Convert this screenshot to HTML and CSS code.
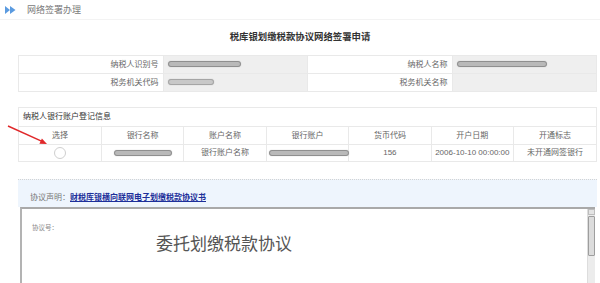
FILE: index.html
```html
<!DOCTYPE html>
<html lang="zh-CN">
<head>
    <meta charset="UTF-8">
    <title>网络签署办理</title>
    <link rel="stylesheet" href="styles.css">
</head>
<body>
    <div class="topbar">
        <svg viewBox="0 0 11 8"><polygon points="0,0 5,4 0,8" fill="#5b9be0"/><polygon points="5,0 10.5,4 5,8" fill="#5b9be0"/></svg>
        <span>网络签署办理</span>
    </div>

    <h1 class="title">税库银划缴税款协议网络签署申请</h1>

    <table class="info">
        <tr>
            <td class="lbl">纳税人识别号</td>
            <td class="val"><span class="blur" style="width:73px"></span></td>
            <td class="lbl">纳税人名称</td>
            <td class="val"><span class="blur" style="width:90px"></span></td>
        </tr>
        <tr>
            <td class="lbl">税务机关代码</td>
            <td class="val"><span class="blur light" style="width:46px"></span></td>
            <td class="lbl">税务机关名称</td>
            <td class="val"></td>
        </tr>
    </table>

    <div class="bank">
        <div class="bank-title">纳税人银行账户登记信息</div>
        <table class="bank-table">
            <tr class="head">
                <td>选择</td>
                <td>银行名称</td>
                <td>账户名称</td>
                <td>银行账户</td>
                <td>货币代码</td>
                <td>开户日期</td>
                <td>开通标志</td>
            </tr>
            <tr>
                <td><span class="radio"></span></td>
                <td><span class="blur" style="width:58px"></span></td>
                <td>银行账户名称</td>
                <td class="left"><span class="blur" style="width:80px"></span></td>
                <td>156</td>
                <td>2006-10-10 00:00:00</td>
                <td>未开通网签银行</td>
            </tr>
        </table>
    </div>

    <div class="agree">协议声明：<a href="#">财税库银横向联网电子划缴税款协议书</a></div>

    <div class="frame">
        <div class="doc">
            <div class="doc-no">协议号：</div>
            <div class="doc-title">委托划缴税款协议</div>
        </div>
        <div class="scroll">
            <div class="scroll-up"></div>
            <div class="scroll-thumb"></div>
        </div>
    </div>

    <svg class="arrow" viewBox="0 0 60 35" width="60" height="35">
        <line x1="8" y1="8" x2="42" y2="23.4" stroke="#e0282a" stroke-width="1.4"/>
        <polygon points="47,26 39.4,25.8 41.9,20.4" fill="#e0282a"/>
    </svg>
</body>
</html>
```

FILE: styles.css
```css
* {
    box-sizing: border-box;
}
body {
    margin: 0;
    width: 600px;
    height: 283px;
    overflow: hidden;
    position: relative;
    background: #fff;
    color: #666;
    font-family: "Liberation Sans", "Noto Sans CJK SC", sans-serif;
    font-size: 8px;
}
.topbar {
    height: 20px;
    display: flex;
    align-items: center;
    padding-left: 5px;
    border-bottom: 1px solid #f3f3f3;
}
.topbar svg {
    width: 11px;
    height: 8px;
}
.topbar span {
    margin-left: 11px;
    font-size: 9px;
    color: #7a7a7a;
}
.title {
    margin: 11px 0 0;
    height: 11px;
    line-height: 11px;
    text-align: center;
    font-size: 9.4px;
    font-weight: bold;
    color: #333;
}
.info {
    width: 579px;
    margin: 13px 0 0 18px;
    border-collapse: collapse;
    table-layout: fixed;
}
.info td {
    height: 18px;
    padding: 0 4px;
    border: 1px solid #e9e9e9;
    line-height: 10px;
}
.info .lbl {
    text-align: right;
    background: #fff;
}
.info .val {
    background: #efefef;
}
.blur {
    display: inline-block;
    height: 6px;
    vertical-align: middle;
    border-radius: 3px;
    background: #b9b9b9;
    border: 1px solid #8f8f8f;
    box-shadow: 0 0 1px #aaa;
}
.blur.light {
    background: #c8c8c8;
    border-color: #a5a5a5;
}
.bank {
    width: 579px;
    margin: 15px 0 0 18px;
    border: 1px solid #e9e9e9;
    border-bottom: none;
}
.bank-title {
    height: 18px;
    line-height: 18px;
    padding-left: 4px;
    color: #333;
}
.bank-table {
    width: 100%;
    border-collapse: collapse;
    table-layout: fixed;
}
.bank-table td {
    height: 17px;
    padding: 0;
    border: 1px solid #e9e9e9;
    text-align: center;
    line-height: 10px;
    white-space: nowrap;
}
.bank-table tr td:first-child {
    border-left: none;
}
.bank-table tr td:last-child {
    border-right: none;
}
.bank-table .head td {
    height: 18px;
}
.bank-table td.left {
    text-align: left;
    padding-left: 2px;
}
.radio {
    display: inline-block;
    width: 12px;
    height: 12px;
    vertical-align: middle;
    border: 1px solid #cfcfcf;
    border-radius: 50%;
}
.agree {
    width: 579px;
    height: 28px;
    margin: 17px 0 0 18px;
    padding: 13px 0 0 12px;
    line-height: 10px;
    background: #eef5fd;
    border-top: 1px dotted #d3d3d3;
    color: #777;
}
.agree a {
    color: #1d2f9a;
    font-weight: bold;
    text-decoration: underline;
}
.frame {
    display: flex;
    width: 575px;
    height: 90px;
    margin-left: 20px;
    border-top: 2px solid #a9a9a9;
    border-left: 2px solid #b3b3b3;
}
.doc {
    flex: 1;
    padding: 15px 0 0 10px;
}
.doc-no {
    font-size: 6.5px;
    line-height: 8px;
    color: #888;
}
.doc-title {
    margin: 3px 0 0 124px;
    font-size: 17px;
    line-height: 20px;
    color: #555;
}
.scroll {
    width: 8px;
    background: #ececec;
    border-left: 1px solid #ddd;
}
.scroll-up {
    height: 6px;
    background: #e4e4e4;
    border: 1px solid #bdbdbd;
}
.scroll-thumb {
    height: 40px;
    margin-top: 1px;
    background: #dcdcdc;
    border: 1px solid #9e9e9e;
    border-radius: 1px;
}
.arrow {
    position: absolute;
    left: 0;
    top: 118px;
}
```
